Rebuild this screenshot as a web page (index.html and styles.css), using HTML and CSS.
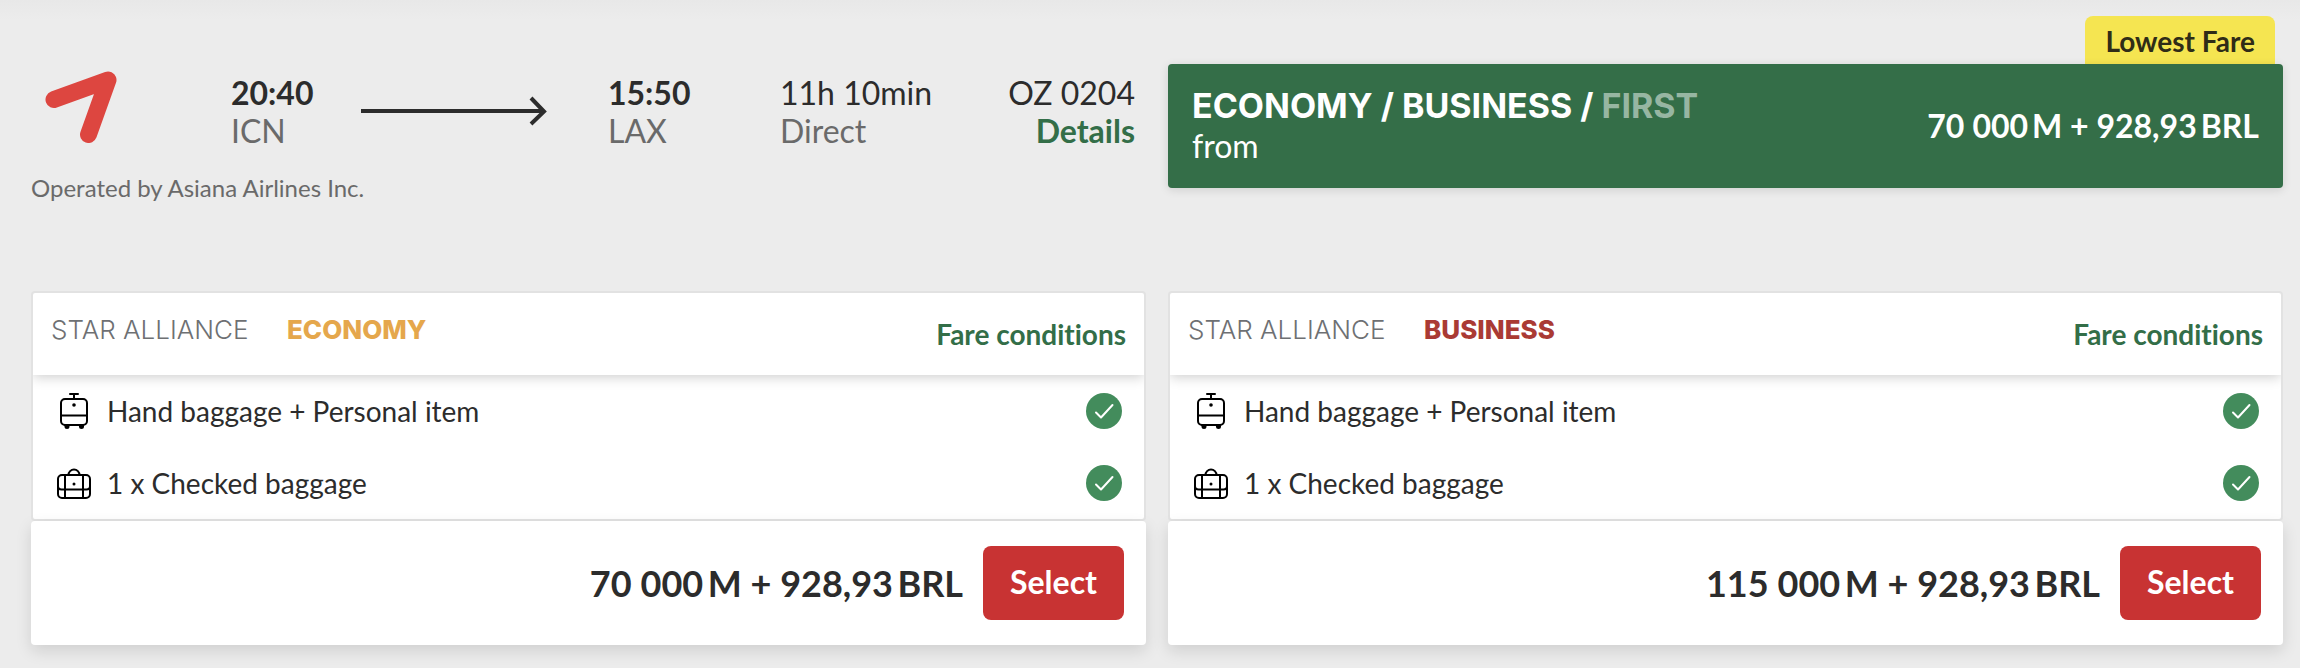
FILE: index.html
```html
<!DOCTYPE html>
<html lang="en">
<head>
<meta charset="utf-8">
<title>Flight fares</title>
<link rel="stylesheet" href="styles.css">
</head>
<body>
<svg class="sprite" aria-hidden="true">
  <symbol id="cabin" viewBox="0 0 36 40">
    <g fill="none" stroke="#000" stroke-width="2" stroke-linecap="round">
      <path d="M14 3H22M18 3V8"/>
      <rect x="5" y="8" width="26" height="26" rx="4"/>
      <path d="M5 24.500H31"/>
    </g>
    <circle cx="18" cy="14" r="1.800"/>
    <path d="M8 34h5.500v1.500a2.500 2.500 0 0 1-5 0zM22.500 34h5.500v1.500a2.500 2.500 0 0 1-5 0z"/>
  </symbol>
  <symbol id="suitcase" viewBox="0 0 36 40">
    <g fill="none" stroke="#000" stroke-width="2">
      <rect x="2" y="12" width="32" height="23" rx="4"/>
      <path d="M12.500 12a5.500 5.500 0 0 1 11 0M9 12V35M27 12V35M2 23.500q0 3 3.500 3H30.500q3.500 0 3.500-3"/>
    </g>
    <circle cx="18" cy="21" r="1.500"/>
  </symbol>
  <symbol id="check" viewBox="0 0 36 36">
    <circle cx="18" cy="18" r="18" fill="#438c5c"/>
    <path d="M10 19.500L15 24.500L26.500 12" fill="none" stroke="#fff" stroke-width="2" stroke-linecap="round" stroke-linejoin="round"/>
  </symbol>
</svg>
<main class="page">
  <section class="flight">
    <div class="legs">
      <svg class="airline" viewBox="0 0 72 72" role="img" aria-label="Asiana Airlines"><path d="M9 28.500L63 9L43.500 63.500" fill="none" stroke="#dd4640" stroke-width="17" stroke-linecap="round" stroke-linejoin="round"/></svg>
      <div><strong>20:40</strong><span class="muted">ICN</span></div>
      <svg class="arrow" viewBox="0 0 186 30" aria-hidden="true"><path d="M0 15H183M170 2L183 15.500L170 28" fill="none" stroke="#2c2c2c" stroke-width="4"/></svg>
      <div><strong>15:50</strong><span class="muted">LAX</span></div>
      <div><span>11h 10min</span><span class="muted">Direct</span></div>
      <div class="number"><span>OZ 0204</span><a href="#details">Details</a></div>
    </div>
    <p class="operator">Operated by Asiana Airlines Inc.</p>
  </section>
  <section class="summary">
    <span class="badge">Lowest Fare</span>
    <div class="offer">
      <div>
        <h2 class="cabins">ECONOMY / BUSINESS / <span class="off">FIRST</span></h2>
        <p class="from">from</p>
      </div>
      <strong>70&#8239;000&#8201;M + 928,93&#8201;BRL</strong>
    </div>
  </section>
  <article class="fare">
    <div class="card">
      <header class="head">
        <h3 class="brand"><span class="alliance">STAR ALLIANCE</span><span class="economy">ECONOMY</span></h3>
        <a href="#economy-conditions">Fare conditions</a>
      </header>
      <ul class="items">
        <li><svg class="bag"><use href="#cabin"/></svg><span>Hand baggage + Personal item</span><svg class="check" role="img" aria-label="Included"><use href="#check"/></svg></li>
        <li><svg class="bag"><use href="#suitcase"/></svg><span>1 x Checked baggage</span><svg class="check" role="img" aria-label="Included"><use href="#check"/></svg></li>
      </ul>
    </div>
    <footer class="buy"><strong>70&#8239;000&#8201;M + 928,93&#8201;BRL</strong><button type="button">Select</button></footer>
  </article>
  <article class="fare">
    <div class="card">
      <header class="head">
        <h3 class="brand"><span class="alliance">STAR ALLIANCE</span><span class="business">BUSINESS</span></h3>
        <a href="#business-conditions">Fare conditions</a>
      </header>
      <ul class="items">
        <li><svg class="bag"><use href="#cabin"/></svg><span>Hand baggage + Personal item</span><svg class="check" role="img" aria-label="Included"><use href="#check"/></svg></li>
        <li><svg class="bag"><use href="#suitcase"/></svg><span>1 x Checked baggage</span><svg class="check" role="img" aria-label="Included"><use href="#check"/></svg></li>
      </ul>
    </div>
    <footer class="buy"><strong>115&#8239;000&#8201;M + 928,93&#8201;BRL</strong><button type="button">Select</button></footer>
  </article>
</main>
</body>
</html>
```
FILE: styles.css
```css
* { box-sizing: border-box; }
body {
  margin: 0;
  background: linear-gradient(#e8e8e8, #ececec 20px) #ececec;
  background-repeat: no-repeat;
  color: #2c2c2c;
  font-family: Lato, "Liberation Sans", sans-serif;
  font-size: 28px;
  font-variant-ligatures: none;
  line-height: 38px;
}
h2, h3, p, ul { margin: 0; padding: 0; }
a { color: #336e48; font-weight: 700; text-decoration: none; }
.sprite { position: absolute; width: 0; height: 0; }
.page {
  display: grid;
  grid-template-columns: 1fr 1fr;
  gap: 84px 22px;
  padding: 16px 17px 22px 31px;
}
.flight { padding-top: 55px; }
.legs {
  display: grid;
  grid-template-columns: 200fr 130fr 247fr 172fr 171fr 184fr;
  padding-right: 11px;
  font-size: 32px;
}
.legs > div { display: flex; flex-direction: column; padding-top: 3px; }
.legs .number { align-items: flex-end; }
.legs .airline { width: 72px; height: 72px; margin-left: 14px; }
.arrow { width: 186px; height: 30px; margin-top: 25px; }
.muted { color: #6a6a6a; }
.operator { margin-top: 19px; color: #6a6a6a; font-size: 24px; }
.summary { display: flex; flex-direction: column; }
.badge {
  align-self: flex-end;
  height: 48px;
  margin-right: 8px;
  padding: 6px 20px;
  border-radius: 8px 8px 0 0;
  background: #f5e551;
  color: #2f2c17;
  font-weight: 700;
}
.offer {
  display: flex;
  align-items: center;
  justify-content: space-between;
  padding: 22px 24px;
  border-radius: 4px;
  background: #346e48;
  box-shadow: 0 2px 10px rgba(0, 0, 0, 0.12);
  color: #fff;
  font-size: 32px;
  line-height: 40px;
}
.cabins { font: 700 34px/40px Inter, "Liberation Sans", sans-serif; }
.off { color: #97b6a2; }
.fare { display: flex; flex-direction: column; }
.card {
  border: 2px solid #e2e2e2;
  border-radius: 4px;
  background: #fff;
  overflow: hidden;
}
.head {
  display: flex;
  align-items: center;
  justify-content: space-between;
  height: 82px;
  padding: 0 18px;
  box-shadow: 0 2px 12px rgba(0, 0, 0, 0.2);
}
.brand {
  display: flex;
  align-items: baseline;
  padding-bottom: 8px;
  font: 800 26px/32px Inter, "Liberation Sans", sans-serif;
}
.alliance { min-width: 236px; color: #6e7073; font-weight: 300; }
.economy { color: #e5a74c; }
.business { color: #aa3a34; }
.items { list-style: none; }
.items li { display: flex; align-items: center; height: 72px; padding: 0 22px 0 23px; }
.bag { width: 36px; height: 40px; margin-right: 15px; }
.check { width: 36px; height: 36px; margin-left: auto; }
.buy {
  display: flex;
  align-items: center;
  justify-content: flex-end;
  gap: 20px;
  padding: 25px 22px;
  border-radius: 4px;
  background: #fff;
  box-shadow: 0 6px 16px rgba(0, 0, 0, 0.12);
  font-size: 36px;
}
.buy button {
  padding: 17px 27px 19px;
  border: 0;
  border-radius: 8px;
  background: #c83333;
  color: #fff;
  font: 700 32px/38px Lato, "Liberation Sans", sans-serif;
}
```
